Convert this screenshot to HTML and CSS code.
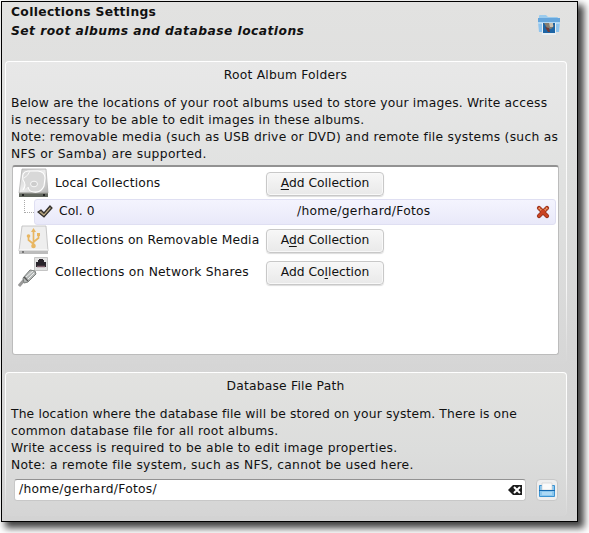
FILE: index.html
```html
<!DOCTYPE html>
<html lang="en">
<head>
<meta charset="utf-8">
<title>Collections Settings</title>
<link rel="stylesheet" href="styles.css">
</head>
<body>
<main class="window">
  <header class="header">
    <div>
      <h1>Collections Settings</h1>
      <h2>Set root albums and database locations</h2>
    </div>
    <svg class="album-icon" width="24" height="22" viewBox="0 0 24 22">
      <path d="M2 2Q2 1 3 1h6l2 2h9q1 0 1 1v4H2z" fill="#9bcbed"/>
      <path d="M1 4h22v5H1z" fill="#66a6dc"/>
      <path d="M1 8h22l-1 10H2z" fill="#8fc5ef"/>
      <path d="M1 8h22v2H1z" fill="#b2d8f4"/>
      <path d="M5 9h14v12H5z" fill="#e8eef2"/>
      <path d="M6 9h12v10H6z" fill="#1d65a5"/>
      <path d="M7 9h8l2 3-3 3-4-1z" fill="#867d70"/>
      <path d="M12 9h4v4h-3z" fill="#c8c1b4"/>
      <path d="M8 13l4 1 1 4h-2z" fill="#743b36"/>
    </svg>
  </header>

  <section class="group roots">
    <h3>Root Album Folders</h3>
    <div class="copy">
      <p class="l1">Below are the locations of your root albums used to store your images. Write access</p>
      <p class="l2">is necessary to be able to edit images in these albums.</p>
      <p class="l3">Note: removable media (such as USB drive or DVD) and remote file systems (such as</p>
      <p class="l4">NFS or Samba) are supported.</p>
    </div>
    <div class="tree">
      <div class="row">
        <svg width="32" height="32" viewBox="0 0 32 32">
          <defs><linearGradient id="metal" x2="1" y2="1"><stop stop-color="#c9c9c9"/><stop offset=".5" stop-color="#ededed"/><stop offset="1" stop-color="#b2b2b2"/></linearGradient></defs>
          <path d="M4 1h24l2 24H1z" fill="url(#metal)" stroke="#aaa" stroke-width=".7"/>
          <path d="M1 25h29v4H1z" fill="#62675f"/><path d="M1 25h29" stroke="#a6a6a2"/>
          <path d="M5 22Q9 17 5 12 3 4 10 3h10q7 1 7 7l-1 8q-3 7-10 6-5 0-6-5" fill="#d8d8d8" stroke="#fff" stroke-width="1.100"/>
          <path d="M6 10q4-2 6-7" fill="none" stroke="#f8f8f8"/>
          <ellipse cx="16" cy="16" rx="3.500" ry="2.800" fill="#ccc" stroke="#f7f7f7"/>
          <path d="M4 27h2M25 27h2" stroke="#222" stroke-width="2"/>
        </svg>
        <span class="name n1">Local Collections</span>
        <button><span><u>A</u>dd Collection</span></button>
      </div>
      <div class="child">
        <i class="branch"></i>
        <div class="selected">
          <svg class="check" width="16" height="14" viewBox="0 0 16 14"><path d="M1 7l3-2 3 3 6-7 2 2-8 9z" fill="#8c806c" stroke="#34302b" stroke-width="1.2"/><path d="M3 7l4 3 6-7" fill="none" stroke="#c5af83"/></svg>
          <span class="col">Col. 0</span>
          <span class="path">/home/gerhard/Fotos</span>
          <svg class="remove" width="14" height="14" viewBox="0 0 14 14"><path d="M3 3l8 8M11 3l-8 8" stroke="#8f2d18" stroke-width="4.2" stroke-linecap="round"/><path d="M3 3l8 8M11 3l-8 8" stroke="#c94322" stroke-width="2.8" stroke-linecap="round"/><path d="M3 3l2 2M11 3L9 5" stroke="#eab985" stroke-width="2" stroke-dasharray="1 1"/></svg>
        </div>
      </div>
      <div class="row">
        <svg width="32" height="32" viewBox="0 0 32 32">
          <path d="M4 1h24l2 25H1z" fill="#eee" stroke="#bbb" stroke-width=".8"/>
          <path d="M1 25h29v4H1z" fill="#bcbcbc"/><path d="M1 25h29" stroke="#fff"/><path d="M4 27h2" stroke="#333"/>
          <path d="M15.500 6v16M15.500 19l-5-4v-4M15.500 17l5-4v-3" fill="none" stroke="#e8b661" stroke-width="1.7"/>
          <path d="M13 7l2.500-4L18 7z" fill="#e8b661"/><circle cx="15.500" cy="21" r="2.300" fill="#e8b661"/><circle cx="10.500" cy="11" r="1.800" fill="#e8b661"/><path d="M19 8h3v3h-3z" fill="#e8b661"/>
        </svg>
        <span class="name n2">Collections on Removable Media</span>
        <button><span>A<u>d</u>d Collection</span></button>
      </div>
      <div class="row">
        <svg width="32" height="32" viewBox="0 0 32 32">
          <path d="M16.500 .5h13v13h-13z" fill="#e2e2e2" stroke="#c4c4c4"/>
          <path d="M18 5h2V3h1V2h4v1h1v2h2v5H18z" fill="#29242b"/><path d="M19 9.500h8" stroke="#785966" stroke-width="1.500"/>
          <path d="M1 29l6-7" stroke="#999" stroke-width="3"/>
          <path d="M5 21l7-8 5 1 1 3-8 8-4 1z" fill="#b4b8b7" stroke="#7c807e"/>
          <path d="M8 20l7-6M9 23l7-7" stroke="#eee"/><path d="M6 20l4 4" stroke="#555" stroke-width="1.500"/>
        </svg>
        <span class="name n3">Collections on Network Shares</span>
        <button><span>Add Co<u>l</u>lection</span></button>
      </div>
    </div>
  </section>

  <section class="group database">
    <h3>Database File Path</h3>
    <div class="copy">
      <p class="d1">The location where the database file will be stored on your system. There is one</p>
      <p class="d2">common database file for all root albums.</p>
      <p class="d3">Write access is required to be able to edit image properties.</p>
      <p class="d4">Note: a remote file system, such as NFS, cannot be used here.</p>
    </div>
    <div class="file-row">
      <div class="field"><span>/home/gerhard/Fotos/</span>
        <svg width="15" height="12" viewBox="0 0 15 12"><path d="M0 6l5-5h9v10H5z" fill="#1d1d1d"/><path d="M6 3l6 6M12 3L6 9" stroke="#fff" stroke-width="2"/></svg>
      </div>
      <div class="browse">
        <svg width="16" height="16" viewBox="0 0 16 16"><path d="M.5 3.500h15v11H.5z" fill="#8bc7ee" stroke="#3b93d2"/><path d="M3 1h10v7H3z" fill="#fafafa" stroke="#ccc" stroke-width=".6"/><path d="M0 8.500h16" stroke="#1668ae"/><path d="M3 10h10v3H3z" fill="#add9f5"/></svg>
      </div>
    </div>
  </section>
</main>
</body>
</html>
```
FILE: styles.css
```css
* { box-sizing: border-box; }
body {
  margin: 0;
  padding: 1px;
  height: 533px;
  overflow: hidden;
  background: #fff;
  color: #111;
  font: 12.3px/17px "DejaVu Sans", sans-serif;
}
h1, h2, h3, p { margin: 0; font-size: inherit; }
p { height: 17px; white-space: nowrap; }
.window {
  width: 577px;
  height: 521px;
  border: 1px solid #000;
  padding: 0 10px 0 3px;
  background: linear-gradient(#e2e2e1, #dcdddc 33%, #d6d6d6 65%, #d3d3d3);
  box-shadow: 5px 5px 7px 1px rgba(0,0,0,.75);
}
.header {
  display: flex;
  justify-content: space-between;
  height: 59px;
  padding: 1px 6px 0 6px;
}
h1 { line-height: 19px; letter-spacing: .34px; }
h2 { line-height: 19px; font-style: italic; letter-spacing: .45px; }
h1, h2 { white-space: nowrap; }
.album-icon { margin-top: 11px; }
.group {
  width: 562px;
  padding: 5px 7px 0 6px;
  border: 1px solid transparent;
  border-radius: 4px;
  background: linear-gradient(#e8e8e8, #dfe0df 45%, #d6d6d6) padding-box,
    linear-gradient(#fff, #f6f6f6 75%, #d5d5d5) border-box;
}
.roots { height: 304px; }
.database {
  height: 144px;
  margin-top: 7px;
  background: linear-gradient(#e2e2e0, #dcdddc 55%, #d5d5d5) padding-box,
    linear-gradient(#fff, #f3f3f3 70%, #d5d5d5) border-box;
}
h3 { text-align: center; font-weight: normal; letter-spacing: .22px; }
.copy { padding-top: 11px; margin-left: -1px; }
.l1 { letter-spacing: .205px; }
.l2 { letter-spacing: .24px; }
.l3 { letter-spacing: .28px; }
.l4 { letter-spacing: .35px; }
.d1 { letter-spacing: .15px; }
.d2 { letter-spacing: .24px; }
.d3 { letter-spacing: .28px; }
.d4 { letter-spacing: .3px; }
.tree {
  height: 190px;
  width: 547px;
  margin-top: 2px;
  padding: 1px;
  border: 1px solid #bcbcbc;
  border-top: 2px solid #929292;
  border-radius: 3px;
  background: #fff;
}
.row { display: flex; align-items: center; height: 32px; padding-left: 4px; }
.row svg { flex: none; }
.name { width: 207px; margin-left: 5px; padding-bottom: 2px; white-space: nowrap; }
.n1 { letter-spacing: .14px; }
.n2 { letter-spacing: .15px; }
.n3 { letter-spacing: .22px; }
button {
  width: 118px;
  height: 24px;
  margin-left: 4px;
  padding: 0 0 2px;
  border: 1px solid #c8c8c8;
  border-radius: 4px;
  box-shadow: inset 0 0 0 1px #f8f8f8, 0 1px 1px #ddd;
  background: linear-gradient(#f7f7f7, #e9e9e9);
  color: inherit;
  font: inherit;
  white-space: nowrap;
}
u { text-underline-offset: 2px; }
.child { display: flex; height: 25px; }
.branch { width: 10px; height: 13px; margin-left: 10px; border-left: 1px dotted #aaa; border-bottom: 1px dotted #aaa; }
.selected {
  display: flex;
  align-items: center;
  width: 522px;
  margin-top: -1px;
  border: 1px solid #dfdff2;
  border-radius: 3px;
  background: linear-gradient(#f4f4fe, #e9e9f9);
}
.check { margin-left: 2px; }
.col { width: 238px; margin-left: 6px; padding-bottom: 1px; letter-spacing: .1px; }
.path { width: 239px; padding-bottom: 1px; letter-spacing: .27px; }
.file-row { display: flex; margin: 5px 0 0 2px; align-items: center; }
.field {
  display: flex;
  justify-content: space-between;
  align-items: center;
  width: 512px;
  height: 22px;
  padding: 0 2px 0 4px;
  border: 1px solid #c8c8c8;
  border-top-color: #929292;
  border-radius: 3px;
  background: #fff;
}
.field span { padding-bottom: 1px; letter-spacing: .27px; }
.browse {
  display: grid;
  place-items: center;
  width: 22px;
  height: 22px;
  margin-left: 10px;
  border: 1px solid #c8c8c8;
  border-radius: 4px;
  background: #eee;
}
```
